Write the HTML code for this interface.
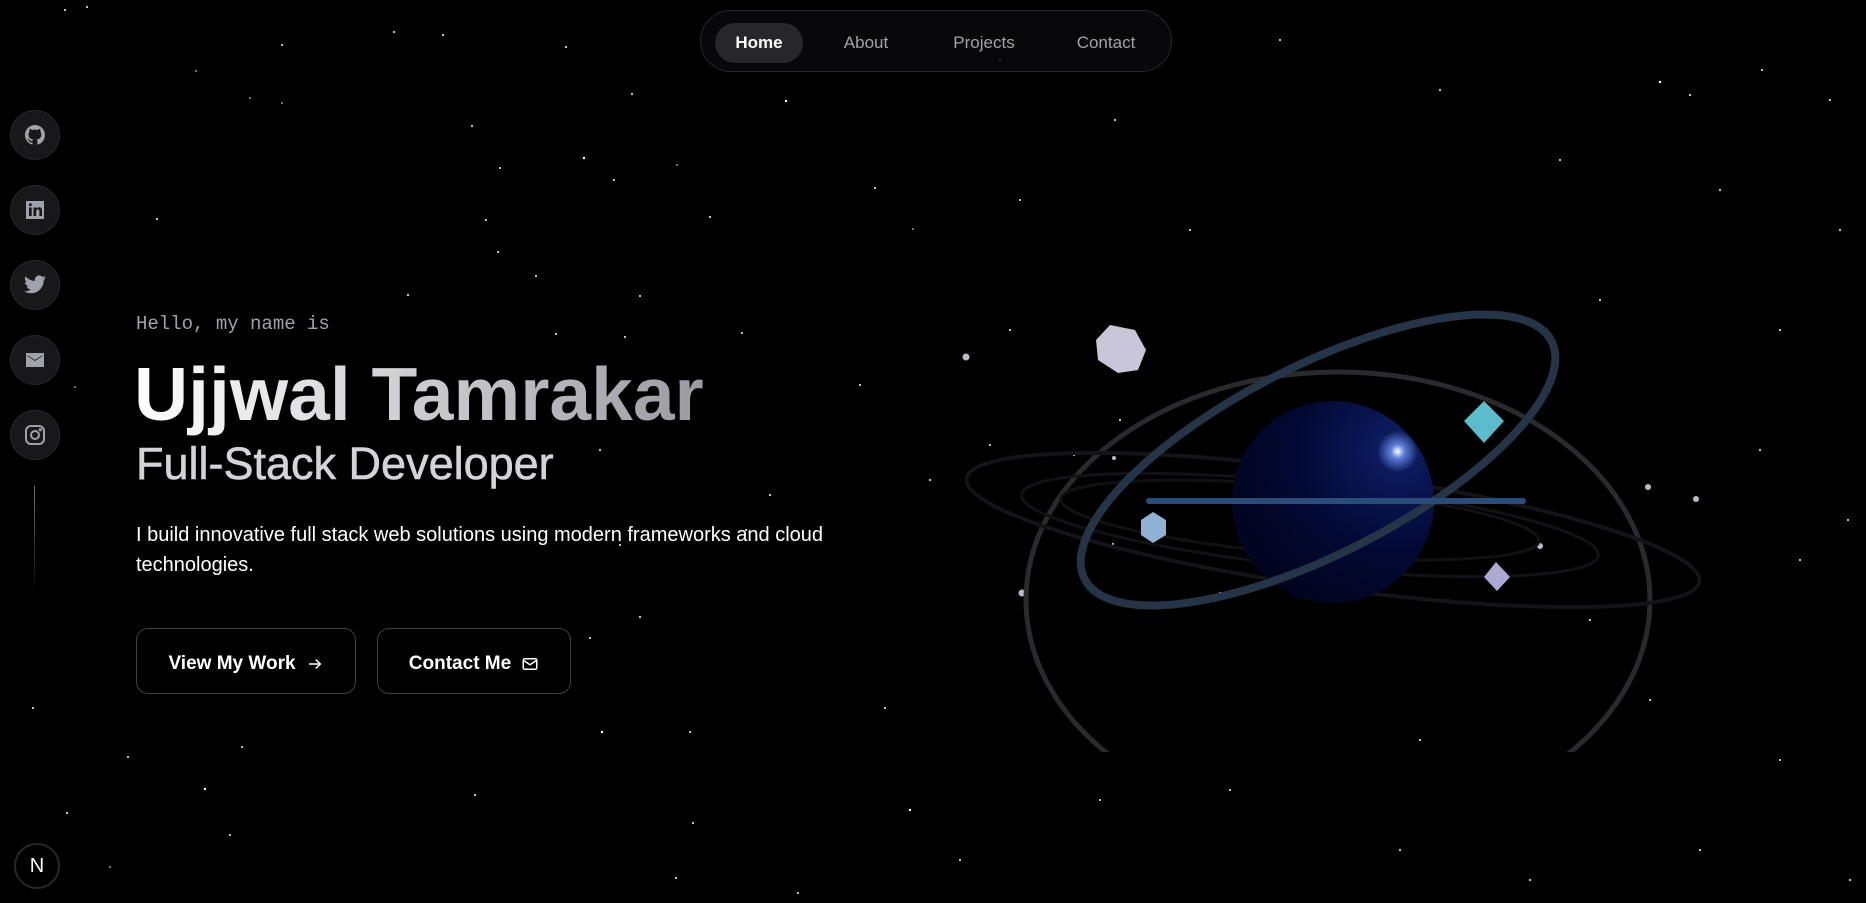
<!DOCTYPE html>
<html><head><meta charset="utf-8"><style>
*{margin:0;padding:0;box-sizing:border-box}
html,body{width:1866px;height:903px;background:#000;overflow:hidden;font-family:"Liberation Sans","DejaVu Sans",sans-serif;color:#fff}
#stars{position:absolute;left:0;top:0}
nav{position:absolute;left:700px;top:10px;width:472px;height:62px;border:1px solid #27272a;border-radius:31px;background:rgba(10,10,12,.8)}
nav a{position:absolute;top:12px;height:40px;line-height:40px;font-size:17px;color:#a1a1aa;text-decoration:none;text-align:center}
nav a.on{left:14px;width:88px;background:#27272a;border-radius:20px;color:#fff;font-weight:bold}
.soc{position:absolute;left:10px;width:50px;height:50px;border-radius:50%;background:#18181b;border:1px solid #27272a;display:flex;align-items:center;justify-content:center}
.soc svg{width:24px;height:24px;fill:#a1a1aa}
.vl{position:absolute;left:34px;top:486px;width:1px;height:110px;background:linear-gradient(#71717a,transparent)}
.nb{position:absolute;left:14px;top:843px;width:46px;height:46px;border-radius:50%;border:2px solid #27272a;background:#000;color:#fff;font-size:20px;display:flex;align-items:center;justify-content:center}
.hello{position:absolute;left:136px;top:313px;font-family:"Liberation Mono",monospace;font-size:19px;color:#a1a1aa}
h1{position:absolute;left:134px;top:352px;font-size:75px;font-weight:bold;line-height:84px;background:linear-gradient(90deg,#fff,#9a9aa2);-webkit-background-clip:text;background-clip:text;color:transparent;white-space:nowrap}
h2{position:absolute;left:136px;top:438px;font-size:45px;font-weight:normal;color:#d4d4d8;white-space:nowrap;-webkit-text-stroke:.6px #d4d4d8}
p{position:absolute;left:136px;top:520px;font-size:20px;line-height:30px;color:#fff;width:800px}
.btn{position:absolute;top:628px;height:66px;border:1px solid #3f3f46;border-radius:12px;font-size:19px;font-weight:bold;display:flex;align-items:center;justify-content:center;gap:10px;color:#fff;padding-top:5px}
</style></head><body>
<svg id="stars" width="1866" height="903">
<g fill="#fff">
<circle cx="65" cy="10" r="1"/><circle cx="87" cy="7" r="1"/><circle cx="282" cy="45" r="1"/><circle cx="394" cy="32" r="1"/><circle cx="443" cy="35" r="1"/><circle cx="196" cy="71" r=".8"/><circle cx="566" cy="47" r="1"/><circle cx="632" cy="94" r="1"/><circle cx="786" cy="101" r="1.2"/><circle cx="250" cy="98" r=".8"/><circle cx="282" cy="103" r=".8"/><circle cx="472" cy="126" r="1"/><circle cx="584" cy="158" r="1.2"/><circle cx="500" cy="168" r="1"/><circle cx="677" cy="165" r=".8"/><circle cx="614" cy="180" r="1"/><circle cx="710" cy="217" r="1"/><circle cx="157" cy="219" r="1"/><circle cx="486" cy="220" r="1"/><circle cx="875" cy="188" r="1"/><circle cx="913" cy="229" r=".8"/><circle cx="498" cy="252" r="1"/><circle cx="536" cy="276" r="1"/><circle cx="408" cy="295" r="1"/><circle cx="640" cy="296" r="1"/><circle cx="556" cy="334" r="1"/><circle cx="742" cy="333" r="1"/><circle cx="625" cy="337" r="1"/><circle cx="860" cy="385" r="1"/><circle cx="75" cy="387" r=".8"/><circle cx="600" cy="450" r="1"/><circle cx="770" cy="495" r="1"/><circle cx="746" cy="530" r="1"/><circle cx="620" cy="545" r="1"/><circle cx="930" cy="480" r="1"/><circle cx="640" cy="617" r="1"/><circle cx="590" cy="638" r="1"/><circle cx="33" cy="708" r="1"/><circle cx="602" cy="732" r="1.2"/><circle cx="690" cy="732" r="1"/><circle cx="885" cy="708" r="1"/><circle cx="242" cy="747" r="1"/><circle cx="128" cy="757" r="1"/><circle cx="205" cy="789" r="1.2"/><circle cx="475" cy="795" r="1"/><circle cx="67" cy="813" r="1"/><circle cx="693" cy="823" r="1"/><circle cx="230" cy="835" r="1"/><circle cx="910" cy="810" r="1.2"/><circle cx="110" cy="867" r=".8"/><circle cx="676" cy="878" r="1"/><circle cx="798" cy="893" r="1"/>
<circle cx="1000" cy="60" r="1"/><circle cx="1115" cy="120" r="1"/><circle cx="1280" cy="40" r="1"/><circle cx="1440" cy="90" r="1"/><circle cx="1660" cy="82" r="1.2"/><circle cx="1690" cy="95" r="1"/><circle cx="1762" cy="70" r="1"/><circle cx="1830" cy="100" r="1"/><circle cx="1020" cy="200" r="1"/><circle cx="1190" cy="230" r="1"/><circle cx="1560" cy="160" r="1"/><circle cx="1720" cy="190" r="1"/><circle cx="1840" cy="230" r="1"/><circle cx="1600" cy="300" r="1"/><circle cx="1780" cy="330" r="1"/><circle cx="1010" cy="330" r="1"/><circle cx="1760" cy="450" r="1"/><circle cx="1848" cy="520" r="1"/><circle cx="1120" cy="420" r="1"/><circle cx="1074" cy="455" r="1"/><circle cx="990" cy="445" r="1"/><circle cx="1113" cy="544" r="1"/><circle cx="1220" cy="593" r="1"/><circle cx="1590" cy="620" r="1"/><circle cx="1800" cy="560" r="1"/><circle cx="1650" cy="700" r="1"/><circle cx="1780" cy="760" r="1"/><circle cx="1420" cy="740" r="1"/><circle cx="1050" cy="690" r="1"/><circle cx="1230" cy="790" r="1"/><circle cx="1400" cy="850" r="1"/><circle cx="1700" cy="850" r="1"/><circle cx="1850" cy="880" r="1"/><circle cx="960" cy="860" r="1"/><circle cx="1100" cy="800" r="1"/><circle cx="1530" cy="880" r="1"/>
</g>
<g fill="#b8bcc8"><circle cx="966" cy="357" r="3.5"/><circle cx="1022" cy="593" r="3.5"/><circle cx="1648" cy="487" r="3"/><circle cx="1696" cy="499" r="3"/><circle cx="1540" cy="546" r="3"/><circle cx="1114" cy="458" r="2"/><circle cx="1160" cy="520" r="2"/></g>
<defs><clipPath id="c"><rect x="900" y="250" width="900" height="502"/></clipPath></defs>
<g clip-path="url(#c)" fill="none">
<ellipse cx="1338" cy="600" rx="312" ry="228" stroke="#2a2a2e" stroke-width="5"/>
<ellipse cx="1333" cy="530" rx="370" ry="58" stroke="#141418" stroke-width="4" transform="rotate(8 1333 530)"/>
<ellipse cx="1310" cy="525" rx="290" ry="42" stroke="#121216" stroke-width="3" transform="rotate(6 1310 525)"/>
<ellipse cx="1300" cy="520" rx="240" ry="34" stroke="#111114" stroke-width="3" transform="rotate(5 1300 520)"/>
</g>
<defs><radialGradient id="sp" cx=".82" cy=".25" r=".85"><stop offset="0" stop-color="#fff"/><stop offset=".04" stop-color="#5c7fd8"/><stop offset=".12" stop-color="#0c1a5c"/><stop offset=".6" stop-color="#020833"/><stop offset="1" stop-color="#010520"/></radialGradient></defs>
<circle cx="1333" cy="502" r="101" fill="url(#sp)"/>
<ellipse cx="1318" cy="460" rx="262" ry="94" fill="none" stroke="#253446" stroke-width="8" transform="rotate(-27 1318 460)"/>
<rect x="1146" y="498" width="380" height="6" rx="3" fill="#2a4c78"/>
<polygon points="1110,325 1135,330 1146,350 1138,370 1118,373 1098,360 1096,340" fill="#cac6da"/>
<polygon points="1484,401 1504,421 1484,443 1464,421" fill="#5cbccc"/>
<polygon points="1153,512 1166,520 1166,535 1153,543 1141,535 1141,520" fill="#8fb2d4"/>
<polygon points="1496,562 1510,577 1497,591 1484,577" fill="#aaaad2"/>
</svg>
<nav><a class="on" href="#">Home</a><a href="#" style="left:130px;width:70px">About</a><a href="#" style="left:243px;width:80px">Projects</a><a href="#" style="left:367px;width:76px">Contact</a></nav>

<div class="soc" style="top:110px"><svg viewBox="0 0 24 24"><path d="M12 2a10 10 0 0 0-3.2 19.5c.5.1.7-.2.7-.5v-1.7c-2.8.6-3.4-1.3-3.4-1.3-.5-1.2-1.1-1.5-1.1-1.5-.9-.6.1-.6.1-.6 1 .1 1.5 1 1.5 1 .9 1.5 2.4 1.1 2.9.8.1-.7.4-1.1.6-1.3-2.2-.3-4.6-1.1-4.6-5 0-1.1.4-2 1-2.7-.1-.3-.4-1.3.1-2.7 0 0 .8-.3 2.8 1a9.6 9.6 0 0 1 5 0c1.9-1.3 2.8-1 2.8-1 .5 1.4.2 2.4.1 2.7.6.7 1 1.6 1 2.7 0 3.9-2.3 4.700-4.6 5 .4.3.7.9.7 1.9V21c0 .3.2.6.7.5A10 10 0 0 0 12 2z"/></svg></div>
<div class="soc" style="top:185px"><svg viewBox="0 0 24 24"><path d="M3 3h18v18H3zM6 9.5v8.5h2.7V9.5zM7.35 5.3a1.5 1.5 0 1 0 0 3 1.5 1.5 0 0 0 0-3zM10.5 9.5V18h2.7v-4.4c0-1.2.3-2.2 1.7-2.2s1.5 1.2 1.5 2.3V18H19v-4.9c0-2.5-.6-3.8-3-3.8-1.3 0-2.1.7-2.5 1.3V9.5z" fill-rule="evenodd"/></svg></div>
<div class="soc" style="top:260px"><svg viewBox="0 0 24 24"><path d="M23 4.6a9 9 0 0 1-2.6.7 4.5 4.5 0 0 0 2-2.5 9 9 0 0 1-2.9 1.1 4.5 4.5 0 0 0-7.7 4.1A12.8 12.8 0 0 1 2.5 3.3a4.5 4.5 0 0 0 1.4 6 4.5 4.5 0 0 1-2-.6 4.5 4.5 0 0 0 3.6 4.5 4.5 4.5 0 0 1-2 .1 4.5 4.5 0 0 0 4.2 3.1A9 9 0 0 1 1 18.3 12.8 12.8 0 0 0 7.9 20.3c8.3 0 12.8-6.9 12.8-12.8v-.6A9 9 0 0 0 23 4.6z"/></svg></div>
<div class="soc" style="top:335px"><svg viewBox="0 0 24 24"><path d="M3 5h18v14H3zM4.5 7.2v.8l7.5 5 7.5-5v-.8L12 12z" fill-rule="evenodd"/></svg></div>
<div class="soc" style="top:410px"><svg viewBox="0 0 24 24" fill="none" stroke="#a1a1aa" stroke-width="2"><rect x="3" y="3" width="18" height="18" rx="5" fill="none"/><circle cx="12" cy="12" r="4" fill="none"/><circle cx="17.3" cy="6.7" r=".6" fill="#a1a1aa"/></svg></div>
<div class="vl"></div>
<div class="nb">N</div>

<div class="hello">Hello, my name is</div>
<h1>Ujjwal Tamrakar</h1>
<h2>Full-Stack Developer</h2>
<p>I build innovative full stack web solutions using modern frameworks and cloud<br>technologies.</p>
<div class="btn" style="left:136px;width:220px">View My Work <svg width="18" height="18" viewBox="0 0 24 24" fill="none" stroke="#fff" stroke-width="2"><path d="M4 12h15M13 6l6 6-6 6"/></svg></div>
<div class="btn" style="left:377px;width:194px">Contact Me <svg width="18" height="18" viewBox="0 0 24 24" fill="none" stroke="#fff" stroke-width="2"><rect x="3" y="5" width="18" height="14" rx="2"/><path d="M3 7l9 6 9-6"/></svg></div>
</body></html>
